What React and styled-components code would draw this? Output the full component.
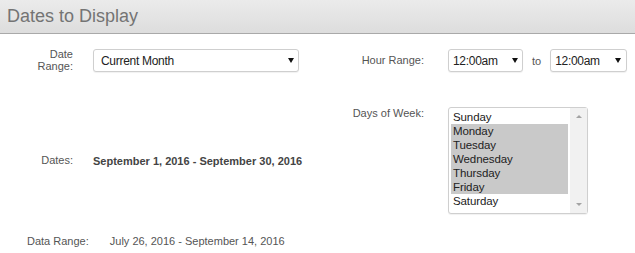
import React from 'react';
import styled, { createGlobalStyle } from 'styled-components';

const GlobalStyle = createGlobalStyle`
  body {
    margin: 0;
    background: #fff;
    font-family: "Liberation Sans", Arial, sans-serif;
  }
`;

const Panel = styled.div`
  width: 635px;
  height: 253px;
  overflow: hidden;
  background: #fff;
`;

const Header = styled.div`
  height: 33px;
  display: flex;
  align-items: center;
  padding-left: 7px;
  background: linear-gradient(#ebebeb, #dddddd);
  border-bottom: 1px solid #a9a9a9;
`;

const Title = styled.h2`
  margin: 0;
  font-size: 18px;
  font-weight: normal;
  color: #747474;
`;

const FormGrid = styled.div`
  display: grid;
  grid-template-columns: 73px 206px 109px auto;
  column-gap: 20px;
  row-gap: 35px;
  padding-top: 15px;
`;

const Label = styled.div`
  font-size: 11px;
  line-height: ${(p) => (p.$tight ? '11.5px' : '13px')};
  color: #555;
  text-align: right;
  padding-right: ${(p) => (p.$inset ? '4px' : '0')};
  align-self: ${(p) => p.$align || 'center'};
`;

const Controls = styled.div`
  display: flex;
  align-items: center;
  gap: 9px;
`;

const SelectBox = styled.div`
  box-sizing: border-box;
  width: ${(p) => p.$width}px;
  height: 23px;
  display: flex;
  align-items: center;
  justify-content: space-between;
  padding: 0 ${(p) => p.$padRight}px 0 ${(p) => p.$padLeft}px;
  border: 1px solid #cfcfcf;
  border-radius: 3px;
  box-shadow: 0 1px 1px rgba(0, 0, 0, 0.06);
  background: #fff;
  font-size: 12px;
  letter-spacing: -0.3px;
  color: #222;
`;

const Caret = styled.span`
  width: 0;
  height: 0;
  border-left: 3px solid transparent;
  border-right: 3px solid transparent;
  border-top: 5px solid #111;
`;

const Joiner = styled.span`
  font-size: 11px;
  color: #555;
`;

const DatesValue = styled.div`
  grid-column: 2 / 3;
  align-self: center;
  font-size: 11px;
  font-weight: bold;
  color: #444;
  white-space: nowrap;
`;

const ListBox = styled.div`
  box-sizing: border-box;
  width: 140px;
  height: 107px;
  display: flex;
  border: 1px solid #cfcfcf;
  border-radius: 3px;
  box-shadow: 0 1px 1px rgba(0, 0, 0, 0.06);
  background: #fff;
`;

const Options = styled.ul`
  flex: 1;
  margin: 0;
  padding: 2px 2px 0 2px;
  list-style: none;
`;

const Option = styled.li`
  height: 14px;
  line-height: 14px;
  padding-left: 2px;
  font-size: 11.5px;
  letter-spacing: -0.1px;
  color: #222;
  background: ${(p) => (p.$selected ? '#c9c9c9' : 'transparent')};
`;

const ScrollTrack = styled.div`
  width: 17px;
  display: flex;
  flex-direction: column;
  justify-content: space-between;
  align-items: center;
  padding: 7px 0 7px;
  background: #f1f1f1;
`;

const Arrow = styled.span`
  width: 0;
  height: 0;
  border-left: 3.5px solid transparent;
  border-right: 3.5px solid transparent;
  ${(p) => (p.$down ? 'border-top' : 'border-bottom')}: 3px solid #a3a3a3;
`;

const DataRow = styled.div`
  display: flex;
  gap: 21px;
  padding: 21px 0 0 27px;
  font-size: 11px;
  line-height: 13px;
  color: #555;
`;

const DataValue = styled.span`
  color: #555;
`;

const days = ['Sunday', 'Monday', 'Tuesday', 'Wednesday', 'Thursday', 'Friday', 'Saturday'];
const selectedDays = ['Monday', 'Tuesday', 'Wednesday', 'Thursday', 'Friday'];

const App = () => {
  return (
    <Panel>
      <GlobalStyle />
      <Header>
        <Title>Dates to Display</Title>
      </Header>
      <FormGrid>
        <Label $tight>
          Date
          <br />
          Range:
        </Label>
        <SelectBox $width={206} $padLeft={7} $padRight={4}>
          Current Month
          <Caret />
        </SelectBox>
        <Label $inset>Hour Range:</Label>
        <Controls>
          <SelectBox $width={75} $padLeft={4} $padRight={4}>
            12:00am
            <Caret />
          </SelectBox>
          <Joiner>to</Joiner>
          <SelectBox $width={77} $padLeft={4} $padRight={5}>
            12:00am
            <Caret />
          </SelectBox>
        </Controls>

        <Label>Dates:</Label>
        <DatesValue>September 1, 2016 - September 30, 2016</DatesValue>
        <Label $inset $align="start">Days of Week:</Label>
        <ListBox>
          <Options>
            {days.map((d) => (
              <Option key={d} $selected={selectedDays.includes(d)}>
                {d}
              </Option>
            ))}
          </Options>
          <ScrollTrack>
            <Arrow />
            <Arrow $down />
          </ScrollTrack>
        </ListBox>
      </FormGrid>
      <DataRow>
        <span>Data Range:</span>
        <DataValue>July 26, 2016 - September 14, 2016</DataValue>
      </DataRow>
    </Panel>
  );
};

export default App;
